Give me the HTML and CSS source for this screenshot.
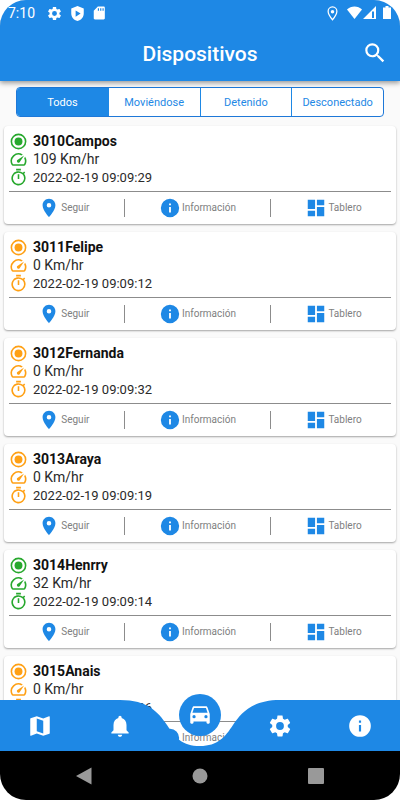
FILE: index.html
```html
<!DOCTYPE html>
<html lang="es">
<head>
<meta charset="utf-8">
<meta name="viewport" content="width=device-width, initial-scale=1">
<title>Dispositivos</title>
<link rel="stylesheet" href="styles.css">
</head>
<body>
<svg class="sprite" aria-hidden="true">
  <symbol id="radio" viewBox="0 0 24 24"><path d="M12 7a5 5 0 1 0 0 10 5 5 0 0 0 0-10z"/><path d="M12 2a10 10 0 1 0 0 20 10 10 0 0 0 0-20zm0 18a8 8 0 1 1 0-16 8 8 0 0 1 0 16z"/></symbol>
  <symbol id="speed" viewBox="0 0 24 24"><path d="M20.38 8.57l-1.23 1.85a8 8 0 0 1-.22 7.58H5.07A8 8 0 0 1 15.58 6.85l1.85-1.23A10 10 0 0 0 3.35 19a2 2 0 0 0 1.72 1h13.85a2 2 0 0 0 1.74-1 10 10 0 0 0-.27-10.44zm-9.79 6.84a2 2 0 0 0 2.83 0l5.66-8.49-8.49 5.66a2 2 0 0 0 0 2.83z"/></symbol>
  <symbol id="timer" viewBox="0 0 24 24"><path d="M15 1H9v2h6V1zm-4 13h2V8h-2v6zm8.03-6.61l1.42-1.42c-.43-.51-.9-.99-1.41-1.41l-1.42 1.42A9 9 0 1 0 21 13c0-2.12-.74-4.07-1.97-5.61zM12 20a7 7 0 1 1 0-14 7 7 0 0 1 0 14z"/></symbol>
  <symbol id="place" viewBox="0 0 24 24"><path d="M12 2C8.13 2 5 5.13 5 9c0 5.25 7 13 7 13s7-7.75 7-13c0-3.87-3.13-7-7-7zm0 9.5a2.5 2.5 0 1 1 0-5 2.5 2.5 0 0 1 0 5z"/></symbol>
  <symbol id="info" viewBox="0 0 24 24"><path d="M12 2a10 10 0 1 0 0 20 10 10 0 0 0 0-20zm1 15h-2v-6h2v6zm0-8h-2V7h2v2z"/></symbol>
  <symbol id="dashboard" viewBox="0 0 24 24"><path d="M3 13h8V3H3v10zm0 8h8v-6H3v6zm10 0h8V11h-8v10zm0-18v6h8V3h-8z"/></symbol>
  <symbol id="gear" viewBox="0 0 24 24"><path d="M19.14 12.94c.04-.3.06-.61.06-.94 0-.32-.02-.64-.07-.94l2.03-1.58c.18-.14.23-.41.12-.61l-1.92-3.32c-.12-.22-.37-.29-.59-.22l-2.39.96c-.5-.38-1.03-.7-1.62-.94l-.36-2.54c-.04-.24-.24-.41-.48-.41h-3.84c-.24 0-.43.17-.47.41l-.36 2.54c-.59.24-1.13.57-1.62.94l-2.39-.96c-.22-.08-.47 0-.59.22L2.74 8.87c-.12.21-.08.47.12.61l2.03 1.58c-.05.3-.09.63-.09.94s.02.64.07.94l-2.03 1.58c-.18.14-.23.41-.12.61l1.92 3.32c.12.22.37.29.59.22l2.39-.96c.5.38 1.03.7 1.62.94l.36 2.54c.05.24.24.41.48.41h3.84c.24 0 .44-.17.47-.41l.36-2.54c.59-.24 1.13-.56 1.62-.94l2.39.96c.22.08.47 0 .59-.22l1.92-3.32c.12-.22.07-.47-.12-.61l-2.01-1.58zM12 15.6a3.6 3.6 0 1 1 0-7.2 3.6 3.6 0 0 1 0 7.2z"/></symbol>
  <symbol id="map" viewBox="0 0 24 24"><path d="M20.5 3l-.16.03L15 5.1 9 3 3.36 4.9c-.21.07-.36.25-.36.48V20.5c0 .28.22.5.5.5l.16-.03L9 18.9l6 2.1 5.64-1.9c.21-.07.36-.25.36-.48V3.5c0-.28-.22-.5-.5-.5zM15 19l-6-2.11V5l6 2.11V19z"/></symbol>
  <symbol id="bell" viewBox="0 0 24 24"><path d="M12 22c1.1 0 2-.9 2-2h-4c0 1.1.89 2 2 2zm6-6v-5c0-3.07-1.64-5.64-4.5-6.32V4a1.5 1.5 0 0 0-3 0v.68C7.63 5.36 6 7.92 6 11v5l-2 2v1h16v-1l-2-2z"/></symbol>
  <symbol id="car" viewBox="0 0 24 24"><path d="M18.92 5.01C18.72 4.42 18.16 4 17.5 4h-11c-.66 0-1.21.42-1.42 1.01L3 11v8c0 .55.45 1 1 1h1c.55 0 1-.45 1-1v-1h12v1c0 .55.45 1 1 1h1c.55 0 1-.45 1-1v-8l-2.08-5.99zM6.5 15a1.5 1.5 0 1 1 0-3 1.5 1.5 0 0 1 0 3zm11 0a1.5 1.5 0 1 1 0-3 1.5 1.5 0 0 1 0 3zM5 10l1.5-4.5h11L19 10H5z"/></symbol>
  <symbol id="search" viewBox="0 0 24 24"><path d="M15.5 14h-.79l-.28-.27A6.47 6.47 0 0 0 16 9.5 6.5 6.5 0 1 0 9.5 16c1.61 0 3.09-.59 4.23-1.57l.27.28v.79l5 4.99L20.49 19l-4.99-5zm-6 0a4.5 4.5 0 1 1 0-9 4.5 4.5 0 0 1 0 9z"/></symbol>
</svg>

<div class="screen">
  <header class="appbar">
    <div class="status">
      <span class="clock">7:10</span>
      <svg class="sicon" viewBox="1 1 22 22"><use href="#gear" width="24" height="24"/></svg>
      <svg class="sicon shield" viewBox="0 0 24 24"><path fill-rule="evenodd" d="M12 0L2 4v8c0 6 4 10.5 10 12 6-1.5 10-6 10-12V4L12 0zM9 7l8 5-8 5V7z"/></svg>
      <svg class="sicon sd" viewBox="0 0 24 24"><path fill-rule="evenodd" d="M20 1H10L3 8v13c0 1.100.9 2 2 2h15c1.100 0 2-.9 2-2V3c0-1.100-.9-2-2-2zm-8 7h-2V4h2v4zm4 0h-2V4h2v4zm4 0h-2V4h2v4z"/></svg>
      <span class="spacer"></span>
      <svg class="sicon pin" viewBox="0 0 24 24"><path d="M12 1.5C7.5 1.5 5 5 5 8.500 5 14 12 22 12 22s7-8 7-13.500c0-3.500-2.500-7-7-7z" fill="none" stroke="currentColor" stroke-width="2"/><circle cx="12" cy="9" r="2.8"/></svg>
      <svg class="signals" viewBox="0 0 45 14"><path d="M0 3.500C4-.5 11-.5 15 3.500L7.500 13z"/><path fill-rule="evenodd" d="M16 13L29 0v13zM25 5.500V12h2V5.500z"/><path d="M38.500 0h3v1.500H44V13h-8V1.500h2.500z"/></svg>
    </div>
    <div class="titlebar">
      <h1>Dispositivos</h1>
      <button class="search" type="button" aria-label="Buscar"><svg viewBox="0 0 24 24"><use href="#search"/></svg></button>
    </div>
  </header>

  <main>
    <div class="tabs">
      <button class="tab active" type="button">Todos</button>
      <button class="tab" type="button">Moviéndose</button>
      <button class="tab" type="button">Detenido</button>
      <button class="tab" type="button">Desconectado</button>
    </div>
    <div class="list" id="list"></div>
  </main>

  <footer class="bottom">
    <nav class="nav">
      <div class="side">
        <a href="#mapa" aria-label="Mapa"><svg viewBox="0 0 24 24"><use href="#map"/></svg></a>
        <a href="#alertas" aria-label="Alertas"><svg viewBox="0 0 24 24"><use href="#bell"/></svg></a>
      </div>
      <div class="side right">
        <a href="#ajustes" aria-label="Ajustes"><svg viewBox="0 0 24 24"><use href="#gear"/></svg></a>
        <a href="#info" aria-label="Información"><svg viewBox="0 0 24 24"><use href="#info"/></svg></a>
      </div>
      <svg class="notch" viewBox="0 0 160 51"><path d="M0 0C28 0 38 12 47 25S62 46 80 46s25-9 33-21S132 0 160 0v51H0z"/></svg>
      <a class="fab" href="#dispositivos" aria-label="Dispositivos"><svg viewBox="0 0 24 24"><use href="#car"/></svg></a>
    </nav>
    <div class="system">
      <button type="button" aria-label="Atrás"><svg viewBox="0 0 16 18"><path d="M15.500.5v17L0 9z"/></svg></button>
      <button type="button" aria-label="Inicio"><svg viewBox="0 0 16 18"><circle cx="8" cy="9" r="7.500"/></svg></button>
      <button type="button" aria-label="Recientes"><svg viewBox="0 0 16 18"><rect y="1" width="16" height="16" rx="1"/></svg></button>
    </div>
  </footer>
</div>
<script src="script.js"></script>
</body>
</html>
```

FILE: styles.css
```css
* { box-sizing: border-box; }

body {
  margin: 0;
  background: #fff;
  font-family: Roboto, "Liberation Sans", sans-serif;
  color: #111;
}

svg { display: block; fill: currentColor; }
button { font: inherit; color: inherit; background: none; border: 0; padding: 0; }
a { color: inherit; }
.sprite { position: absolute; width: 0; height: 0; }

.screen {
  position: relative;
  height: 100vh;
  overflow: hidden;
  display: flex;
  flex-direction: column;
  background: #fafafa;
  border-radius: 26px;
}

.appbar {
  flex: none;
  background: #1e88e5;
  color: #fff;
  box-shadow: 0 2px 5px rgba(0, 0, 0, .4);
  z-index: 1;
}

.status {
  display: flex;
  align-items: center;
  height: 26px;
  padding: 0 8px;
}
.clock { font-size: 14px; width: 39px; }
.sicon { width: 15px; height: 15px; }
.shield { margin-left: 8px; }
.sd { margin-left: 7px; width: 14px; height: 14px; }
.spacer { flex: 1; }
.pin { margin-right: 7px; }
.signals { width: 45px; height: 14px; }

.titlebar {
  position: relative;
  display: flex;
  align-items: center;
  justify-content: center;
  height: 55px;
}
h1 { margin: 0; font-size: 21px; font-weight: 500; }
.search { position: absolute; right: 12px; top: 14px; }
.search svg { width: 26px; height: 26px; }

main { flex: 1; min-height: 0; overflow: hidden; padding-top: 6px; }

.tabs {
  display: flex;
  height: 30px;
  margin: 0 16px 9px;
  border: 1px solid #1e78d8;
  border-radius: 4px;
  background: #fff;
  color: #1e88e5;
  overflow: hidden;
}
.tab { flex: 1 1 0; font-size: 11px; }
.tab + .tab { border-left: 1px solid #1e88e5; }
.tab.active { background: #1e88e5; color: #fff; }

.list { display: flex; flex-direction: column; gap: 8px; padding: 0 4px; }

.card {
  height: 98px;
  flex: none;
  padding-top: 6px;
  background: #fff;
  border-radius: 4px;
  box-shadow: 0 1px 2px rgba(0, 0, 0, .35);
}
.row {
  display: flex;
  align-items: center;
  gap: 5px;
  height: 18px;
  padding-left: 5px;
}
.row svg { width: 19px; height: 19px; color: #ffa014; }
.moving .row svg { color: #27a82d; }
.name { font-size: 14px; font-weight: 700; }
.speed { font-size: 14px; color: #2a2a2a; }
.time { font-size: 13px; color: #2a2a2a; }

.actions {
  display: flex;
  align-items: center;
  justify-content: space-evenly;
  height: 31px;
}
.rule { margin: 5px 5px 0; border: 0; border-top: 1px solid #8c8c8c; }
.action {
  display: flex;
  align-items: center;
  gap: 1px;
  font-size: 10px;
  color: #808080;
}
.action svg { width: 22px; height: 22px; color: #1e88e5; }
.divider { width: 1px; height: 18px; background: #8c8c8c; }

.bottom { position: absolute; left: 0; right: 0; bottom: 0; }

.nav {
  position: relative;
  display: flex;
  justify-content: space-between;
  height: 51px;
  color: #fff;
}
.side {
  display: flex;
  width: calc(50% - 80px);
  background: #1e88e5;
}
.side a {
  flex: none;
  display: flex;
  align-items: center;
  justify-content: center;
  width: 80px;
  z-index: 1;
}
.side.right { justify-content: flex-end; }
.side svg { width: 26px; height: 26px; }
.notch {
  position: absolute;
  left: calc(50% - 80px);
  top: 0;
  width: 160px;
  height: 51px;
  color: #1e88e5;
}
.fab {
  position: absolute;
  left: calc(50% - 21px);
  top: -6px;
  width: 42px;
  height: 42px;
  display: flex;
  align-items: center;
  justify-content: center;
  border-radius: 50%;
  background: #1e88e5;
}
.fab svg { width: 26px; height: 26px; }

.system {
  display: flex;
  align-items: center;
  justify-content: center;
  gap: 100px;
  height: 49px;
  background: #000;
  color: #999;
}
.system svg { width: 16px; height: 18px; }
```

FILE: script.js
```js
const devices = [
  ["3010Campos", 109, "2022-02-19 09:09:29"],
  ["3011Felipe", 0, "2022-02-19 09:09:12"],
  ["3012Fernanda", 0, "2022-02-19 09:09:32"],
  ["3013Araya", 0, "2022-02-19 09:09:19"],
  ["3014Henrry", 32, "2022-02-19 09:09:14"],
  ["3015Anais", 0, "2022-02-19 09:09:36"]
];

const icon = (id) => `<svg viewBox="0 0 24 24"><use href="#${id}"/></svg>`;
const action = (id, label) => `<button class="action" type="button">${icon(id)}<span>${label}</span></button>`;

document.getElementById("list").innerHTML = devices.map(([name, speed, time]) => `
  <article class="card${speed > 0 ? " moving" : ""}">
    <div class="row name">${icon("radio")}<span>${name}</span></div>
    <div class="row speed">${icon("speed")}<span>${speed} Km/hr</span></div>
    <div class="row time">${icon("timer")}<span>${time}</span></div>
    <hr class="rule">
    <div class="actions">
      ${action("place", "Seguir")}
      <span class="divider"></span>
      ${action("info", "Información")}
      <span class="divider"></span>
      ${action("dashboard", "Tablero")}
    </div>
  </article>`).join("");
```
